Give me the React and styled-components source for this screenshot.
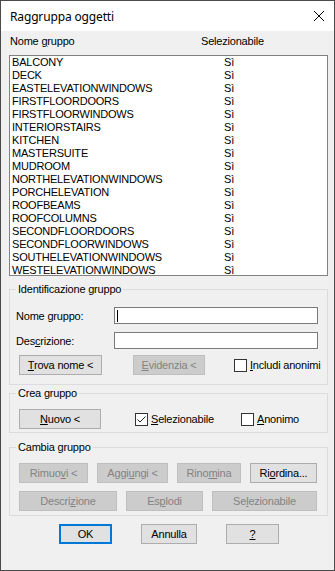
import styled, { createGlobalStyle } from 'styled-components';

const Global = createGlobalStyle`
  body {
    margin: 0;
    background: #fff;
  }
  * {
    box-sizing: border-box;
  }
`;

const Win = styled.div`
  width: 335px;
  height: 571px;
  border: 1px solid #4a4a4a;
  background: #f0f0f0;
  display: flex;
  flex-direction: column;
  font-family: "Liberation Sans", Arial, sans-serif;
  font-size: 11px;
  letter-spacing: -0.2px;
  color: #000;
`;

const TitleBar = styled.div`
  height: 30px;
  flex: none;
  background: #fff;
  display: flex;
  align-items: center;
  justify-content: space-between;
  padding: 0 10px 0 9px;
  font-family: "Noto Sans", sans-serif;
  font-size: 12px;
  letter-spacing: -0.15px;
`;

const Body = styled.div`
  display: flex;
  flex-direction: column;
  padding: 0 6px 0 8px;
`;

const ListHeader = styled.div`
  display: grid;
  grid-template-columns: 191px 1fr;
  padding-left: 1px;
  margin: 4px 0 7px;
  line-height: 13px;
`;

const ListBox = styled.div`
  height: 221px;
  border: 1px solid #828282;
  background: #fff;
`;

const ListRow = styled.div`
  display: grid;
  grid-template-columns: 212px 1fr;
  padding-left: 2px;
  height: 13px;
  line-height: 13px;
  white-space: nowrap;
`;

const Group = styled.fieldset`
  margin: ${p => p.$mt}px 0 0;
  border: 1px solid #dcdcdc;
  padding: ${p => p.$pt}px 9px ${p => p.$pb}px 6px;
  min-width: 0;
`;

const Legend = styled.legend`
  padding: 0 2px;
  line-height: 13px;
`;

const FieldRow = styled.div`
  display: grid;
  grid-template-columns: 98px 204px;
  align-items: center;
  margin-top: ${p => p.$mt || 0}px;
`;

const TextBox = styled.div`
  height: 17px;
  border: 1px solid #7a7a7a;
  background: #fff;
  display: flex;
  align-items: center;
  padding-left: 2px;
`;

const Caret = styled.span`
  width: 1px;
  height: 12px;
  background: #000;
`;

const ButtonGrid = styled.div`
  display: grid;
  grid-template-columns: ${p => p.$cols};
  align-items: center;
  padding-left: 3px;
  margin-top: ${p => p.$mt || 0}px;
`;

const ButtonRow = styled.div`
  display: flex;
  justify-content: space-between;
  padding: 0 1px 0 3px;
  margin-top: ${p => p.$mt || 0}px;
`;

const Button = styled.button`
  width: ${p => p.$w}px;
  height: 20px;
  padding: 0;
  margin: 0;
  font: inherit;
  letter-spacing: inherit;
  line-height: 18px;
  text-align: center;
  color: #000;
  background: #e1e1e1;
  border: 1px solid #adadad;
  border-radius: 0;

  &:disabled {
    background: #cccccc;
    border-color: #bfbfbf;
    color: #838383;
  }

  ${p => p.$default && `
    border: 2px solid #0078d7;
    line-height: 16px;
  `}
`;

const CheckLabel = styled.label`
  display: inline-flex;
  align-items: center;
  gap: 3px;
  line-height: 13px;
  white-space: nowrap;
`;

const Box = styled.span`
  width: 13px;
  height: 13px;
  border: 1px solid #333;
  background: #fff;
  display: inline-flex;
`;

const Footer = styled.div`
  display: flex;
  gap: 29px;
  padding-left: 50px;
  margin-top: 8px;
`;

const items = [
  'BALCONY', 'DECK', 'EASTELEVATIONWINDOWS', 'FIRSTFLOORDOORS', 'FIRSTFLOORWINDOWS',
  'INTERIORSTAIRS', 'KITCHEN', 'MASTERSUITE', 'MUDROOM', 'NORTHELEVATIONWINDOWS',
  'PORCHELEVATION', 'ROOFBEAMS', 'ROOFCOLUMNS', 'SECONDFLOORDOORS', 'SECONDFLOORWINDOWS',
  'SOUTHELEVATIONWINDOWS', 'WESTELEVATIONWINDOWS',
];

const Check = ({ checked, children }) => (
  <CheckLabel>
    <Box>
      {checked && (
        <svg width="11" height="11" viewBox="0 0 11 11">
          <path d="M1.5 5.5 L4 8 L9.5 2.5" fill="none" stroke="#222" strokeWidth="1" />
        </svg>
      )}
    </Box>
    <span>{children}</span>
  </CheckLabel>
);

const App = () => {
  return (
    <Win>
      <Global />
      <TitleBar>
        <span>Raggruppa oggetti</span>
        <svg width="10" height="10" viewBox="0 0 10 10">
          <path d="M0 0 L10 10 M10 0 L0 10" stroke="#000" strokeWidth="1" />
        </svg>
      </TitleBar>
      <Body>
        <ListHeader>
          <span>Nome <u>g</u>ruppo</span>
          <span>Selezionabile</span>
        </ListHeader>
        <ListBox>
          {items.map(name => (
            <ListRow key={name}>
              <span>{name}</span>
              <span>Sì</span>
            </ListRow>
          ))}
        </ListBox>

        <Group $mt={7} $pt={11} $pb={9}>
          <Legend>Identificazione gruppo</Legend>
          <FieldRow>
            <span>Nome <u>g</u>ruppo:</span>
            <TextBox><Caret /></TextBox>
          </FieldRow>
          <FieldRow $mt={8}>
            <span>Des<u>c</u>rizione:</span>
            <TextBox />
          </FieldRow>
          <ButtonGrid $cols="114px 101px auto" $mt={6}>
            <Button $w={83}><u>T</u>rova nome &lt;</Button>
            <Button $w={72} disabled><u>E</u>videnzia &lt;</Button>
            <Check><u>I</u>ncludi anonimi</Check>
          </ButtonGrid>
        </Group>

        <Group $mt={2} $pt={9} $pb={3}>
          <Legend>Crea gruppo</Legend>
          <ButtonGrid $cols="116px 106px auto">
            <Button $w={82}><u>N</u>uovo &lt;</Button>
            <Check checked><u>S</u>elezionabile</Check>
            <Check><u>A</u>nonimo</Check>
          </ButtonGrid>
        </Group>

        <Group $mt={8} $pt={9} $pb={4}>
          <Legend>Cambia gruppo</Legend>
          <ButtonRow>
            <Button $w={69} disabled>Rimuo<u>v</u>i &lt;</Button>
            <Button $w={71} disabled>Aggi<u>u</u>ngi &lt;</Button>
            <Button $w={64} disabled>Rino<u>m</u>ina</Button>
            <Button $w={67}>Ri<u>o</u>rdina...</Button>
          </ButtonRow>
          <ButtonRow $mt={8}>
            <Button $w={98} disabled>Descri<u>z</u>ione</Button>
            <Button $w={77} disabled>Es<u>p</u>lodi</Button>
            <Button $w={105} disabled>Se<u>l</u>ezionabile</Button>
          </ButtonRow>
        </Group>

        <Footer>
          <Button $w={53} $default>OK</Button>
          <Button $w={56}>Annulla</Button>
          <Button $w={53}><u>?</u></Button>
        </Footer>
      </Body>
    </Win>
  );
};

export default App;
